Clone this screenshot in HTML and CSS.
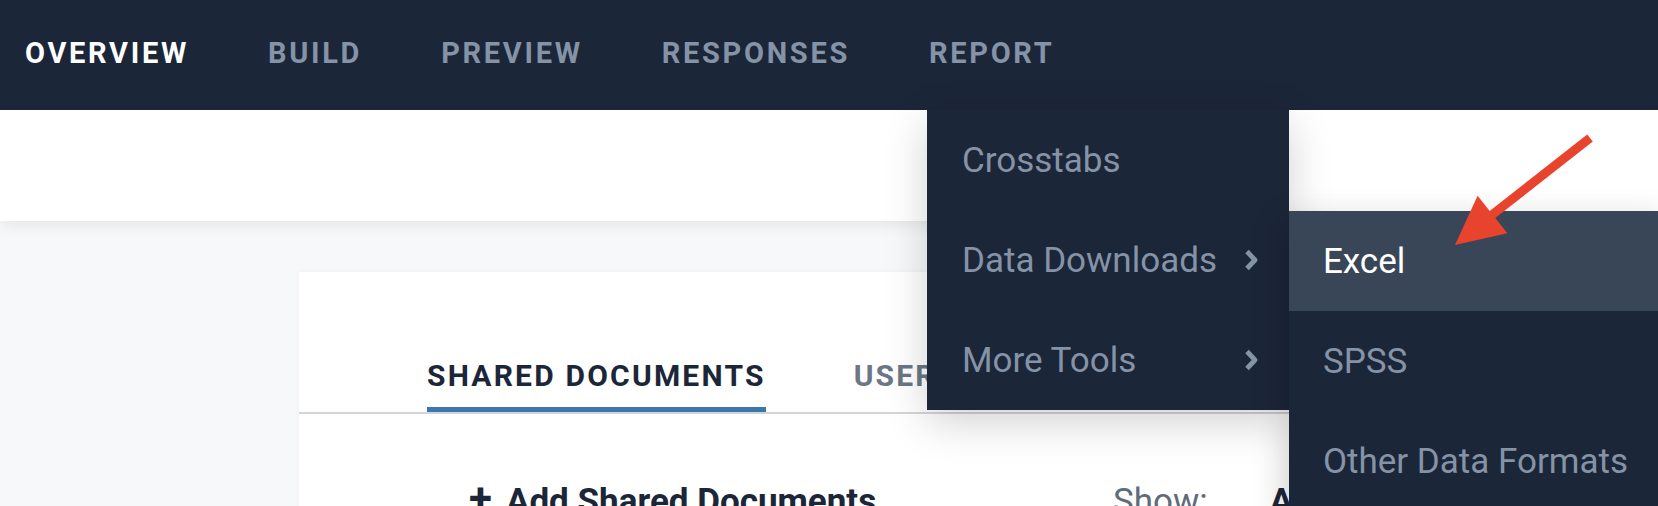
FILE: index.html
```html
<!DOCTYPE html>
<html lang="en">
<head>
    <meta charset="UTF-8">
    <meta name="viewport" content="width=device-width, initial-scale=1.0">
    <title>Survey - Overview</title>
    <link rel="stylesheet" href="styles.css">
</head>
<body>
<div class="topnav">
    <a class="nav-item active" href="#">Overview</a>
    <a class="nav-item" href="#">Build</a>
    <a class="nav-item" href="#">Preview</a>
    <a class="nav-item" href="#">Responses</a>
    <div class="nav-item has-menu">
        <span>Report</span>
        <ul class="dropdown">
            <li class="menu-item">Crosstabs</li>
            <li class="menu-item has-sub">
                <span>Data Downloads</span>
                <svg class="chevron" viewBox="0 0 16 24"><polyline points="4,3.5 12,12 4,20.5"></polyline></svg>
                <ul class="submenu">
                    <li class="menu-item selected">Excel</li>
                    <li class="menu-item">SPSS</li>
                    <li class="menu-item">Other Data Formats</li>
                </ul>
            </li>
            <li class="menu-item has-sub">
                <span>More Tools</span>
                <svg class="chevron" viewBox="0 0 16 24"><polyline points="4,3.5 12,12 4,20.5"></polyline></svg>
            </li>
        </ul>
    </div>
</div>

<div class="subheader"></div>

<div class="page">
    <div class="card">
        <div class="tabs">
            <span class="tab active">Shared Documents</span>
            <span class="tab">Users</span>
        </div>
        <div class="toolbar">
            <span class="add-docs"><span class="plus">+</span>Add Shared Documents</span>
            <span class="show">Show: <b>All</b></span>
        </div>
    </div>
</div>

<!-- annotation arrow pointing at Excel -->
<svg class="annotation" viewBox="1440 125 170 130">
    <polygon points="1587.2,134.5 1592.8,141.5 1495.3,218 1507.4,233.3 1455,245 1477.6,195.7 1489.7,211"></polygon>
</svg>
</body>
</html>
```

FILE: styles.css
```css
html, body {
    overflow: hidden;
}
body {
    font-family: 'Roboto', 'Liberation Sans', sans-serif;
    margin: 0;
    padding: 0;
    background-color: #f6f8fa;
    position: relative;
    height: 506px;
}
.topnav {
    background-color: #1c2639;
    height: 110px;
    display: flex;
    align-items: stretch;
    padding-left: 25px;
    gap: 79px;
    position: relative;
    z-index: 5;
}
.nav-item {
    display: flex;
    align-items: center;
    color: #8593a7;
    text-decoration: none;
    text-transform: uppercase;
    font-weight: 700;
    font-size: 29px;
    letter-spacing: 2.7px;
    padding-bottom: 4px;
}
.nav-item.active {
    color: #ffffff;
}
.has-menu {
    position: relative;
}
.dropdown {
    position: absolute;
    top: 110px;
    left: -2px;
    width: 362px;
    margin: 0;
    padding: 0;
    list-style: none;
    background-color: #1c2639;
    box-shadow: 0 12px 40px rgba(0, 0, 0, 0.18);
    text-transform: none;
    letter-spacing: 0;
}
.menu-item {
    height: 100px;
    display: flex;
    align-items: center;
    padding-left: 35px;
    padding-right: 30px;
    font-size: 35px;
    font-weight: 400;
    color: #8593a7;
    position: relative;
}
.has-sub span {
    flex: 1;
}
.chevron {
    width: 16px;
    height: 24px;
    fill: none;
    stroke: #8593a7;
    stroke-width: 4.8;
    stroke-linejoin: round;
}
.submenu {
    position: absolute;
    top: 1px;
    left: 100%;
    width: 380px;
    margin: 0;
    padding: 0;
    list-style: none;
    background-color: #1c2639;
    box-shadow: -6px 8px 30px rgba(0, 0, 0, 0.18);
}
.submenu .menu-item {
    padding-left: 34px;
}
.submenu .menu-item.selected {
    background-color: #394657;
    color: #ffffff;
}
.subheader {
    background-color: #fff;
    height: 111px;
    box-shadow: 0 4px 14px rgba(0, 0, 0, 0.08);
    position: relative;
    z-index: 2;
}
.page {
    padding-top: 51px;
    padding-left: 299px;
}
.card {
    background-color: #fff;
    width: 1060px;
    height: 400px;
    box-shadow: 0 0 6px rgba(0, 0, 0, 0.04);
}
.tabs {
    display: flex;
    gap: 88px;
    padding: 86px 0 0 128px;
    border-bottom: 2px solid #d3d5d8;
}
.tab {
    text-transform: uppercase;
    font-weight: 700;
    font-size: 30px;
    letter-spacing: 2.2px;
    color: #6b7686;
    padding-bottom: 14px;
    border-bottom: 5px solid transparent;
}
.tab.active {
    color: #1c2639;
    border-bottom-color: #3b77ad;
}
.toolbar {
    display: flex;
    align-items: baseline;
    padding: 64px 0 0 170px;
    line-height: 41px;
}
.add-docs {
    font-size: 35px;
    font-weight: 700;
    color: #1c2639;
    width: 644px;
}
.plus {
    font-size: 42px;
    line-height: 1;
    margin-right: 14px;
}
.show {
    font-size: 35px;
    color: #5f6b7a;
}
.show b {
    color: #1c2639;
    margin-left: 53px;
}
.annotation {
    position: absolute;
    left: 1440px;
    top: 125px;
    width: 170px;
    height: 130px;
    z-index: 10;
    fill: #e8432c;
}
```
